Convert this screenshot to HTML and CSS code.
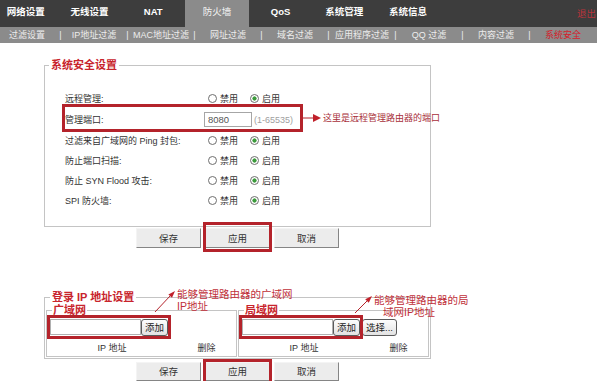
FILE: index.html
```html
<!DOCTYPE html>
<html lang="zh-CN">
  <head>
    <meta charset="UTF-8" />
    <meta name="viewport" content="width=device-width, initial-scale=1.0" />
    <title>防火墙 - 系统安全</title>
    <link rel="stylesheet" href="styles.css">
  </head>
  <body>
    <div class="topnav">
      <a class="tab">网络设置</a>
      <a class="tab">无线设置</a>
      <a class="tab">NAT</a>
      <a class="tab active">防火墙</a>
      <a class="tab">QoS</a>
      <a class="tab">系统管理</a>
      <a class="tab">系统信息</a>
      <a class="logout">退出</a>
    </div>

    <div class="subnav">
      <a>过滤设置</a><span class="sep">|</span>
      <a>IP地址过滤</a><span class="sep">|</span>
      <a>MAC地址过滤</a><span class="sep">|</span>
      <a>网址过滤</a><span class="sep">|</span>
      <a>域名过滤</a><span class="sep">|</span>
      <a>应用程序过滤</a><span class="sep">|</span>
      <a>QQ 过滤</a><span class="sep">|</span>
      <a>内容过滤</a><span class="sep">|</span>
      <a class="current">系统安全</a>
    </div>

    <div class="main">
      <fieldset class="panel panel-security">
        <legend>系统安全设置</legend>

        <div class="row">
          <span class="label">远程管理:</span>
          <span class="radio">禁用</span><span class="radio on">启用</span>
        </div>

        <div class="row row-port">
          <span class="label">管理端口:</span>
          <input class="port" type="text" value="8080" />
          <span class="hint">(1-65535)</span>
          <span class="hl-port"></span>
          <span class="note">
            <svg width="18" height="10" viewBox="0 0 18 10">
              <line x1="0" y1="5" x2="11" y2="5" stroke="#b4232b" stroke-width="1" />
              <polygon points="10,1 18,5 10,9" fill="#c0202a" />
            </svg>
            这里是远程管理路由器的端口
          </span>
        </div>

        <div class="row">
          <span class="label">过滤来自广域网的 Ping 封包:</span>
          <span class="radio">禁用</span><span class="radio on">启用</span>
        </div>

        <div class="row">
          <span class="label">防止端口扫描:</span>
          <span class="radio">禁用</span><span class="radio on">启用</span>
        </div>

        <div class="row">
          <span class="label">防止 SYN Flood 攻击:</span>
          <span class="radio">禁用</span><span class="radio on">启用</span>
        </div>

        <div class="row">
          <span class="label">SPI 防火墙:</span>
          <span class="radio">禁用</span><span class="radio on">启用</span>
        </div>
      </fieldset>

      <div class="actions">
        <button class="btn">保存</button>
        <button class="btn marked">应用</button>
        <button class="btn">取消</button>
      </div>

      <div class="login-box">
        <fieldset class="panel panel-login">
          <legend>登录 IP 地址设置</legend>
          <div class="nets">
            <fieldset class="net">
              <legend>广域网</legend>
              <div class="add-row">
                <span class="hl-group">
                  <input class="ip" type="text" /><button class="small">添加</button>
                </span>
              </div>
              <div class="list-head">
                <span class="col-ip">IP 地址</span>
                <span class="col-del">删除</span>
              </div>
            </fieldset>

            <fieldset class="net">
              <legend>局域网</legend>
              <div class="add-row">
                <span class="hl-group">
                  <input class="ip" type="text" /><button class="small">添加</button>
                </span>
                <button class="small pick">选择...</button>
              </div>
              <div class="list-head">
                <span class="col-ip">IP 地址</span>
                <span class="col-del">删除</span>
              </div>
            </fieldset>
          </div>
        </fieldset>

        <!-- annotations -->
        <svg class="arrow arrow-wan" width="30" height="28" viewBox="0 0 30 28">
          <line x1="5" y1="24" x2="21" y2="7" stroke="#b4232b" stroke-width="1" />
          <polygon points="25,3 22,9.8 18.4,6.4" fill="#c0202a" />
        </svg>
        <span class="callout callout-wan">能够管理路由器的广域网<br>IP地址</span>

        <svg class="arrow arrow-lan" width="26" height="24" viewBox="0 0 26 24">
          <line x1="5" y1="20" x2="18" y2="7" stroke="#b4232b" stroke-width="1" />
          <polygon points="22,3 18.8,9.8 15.2,6.2" fill="#c0202a" />
        </svg>
        <span class="callout callout-lan">能够管理路由器的局<br><span class="indent">域网IP地址</span></span>
      </div>

      <div class="actions actions-bottom">
        <button class="btn">保存</button>
        <button class="btn marked">应用</button>
        <button class="btn">取消</button>
      </div>
    </div>
  </body>
</html>
```

FILE: styles.css
```css
body {
  margin: 0;
  font-family: "Liberation Sans", "Noto Sans CJK SC", sans-serif;
  font-size: 9px;
  color: #333;
  background-color: #fff;
}

/* top navigation */

.topnav {
  display: flex;
  height: 27px;
  background-color: #3d3d3d;
}

.tab {
  width: 63.7px;
  flex-shrink: 0;
  text-align: center;
  line-height: 24px;
  font-size: 9.5px;
  font-weight: bold;
  color: #fff;
}

.tab:first-child {
  margin-left: -6px;
}

.tab.active {
  background-color: #8b8b8b;
  font-weight: normal;
  color: #f2f2f2;
}

.logout {
  margin-left: auto;
  margin-right: 1px;
  line-height: 27px;
  font-size: 9.5px;
  color: #b8343c;
}

.subnav {
  display: flex;
  height: 16px;
  line-height: 16px;
  background-color: #8b8b8b;
  color: #ededed;
  border-bottom: 1px solid #fff;
}

.subnav a {
  width: 67px;
  flex-shrink: 0;
  text-align: center;
}

.subnav a:first-child {
  margin-left: -6.5px;
}

.subnav a.current {
  color: #d4202a;
}

.subnav .sep {
  width: 0;
  display: flex;
  justify-content: center;
}

/* content */

.main {
  padding-left: 44px;
}

.panel {
  width: 387px;
  box-sizing: border-box;
  margin: 0;
  border: 1px solid #c4c4c4;
}

.panel > legend {
  margin-left: 4px;
  padding: 0 2px;
  font-size: 11px;
  line-height: 13px;
  font-weight: bold;
  color: #c8242c;
}

.panel-security {
  margin-top: 15px;
  padding: 16.5px 0 15px;
}

.row {
  position: relative;
  display: flex;
  align-items: center;
  height: 20px;
  padding-left: 20px;
}

.row-port {
  height: 22px;
}

.label {
  width: 139px;
  flex-shrink: 0;
}

.radio {
  display: inline-flex;
  align-items: center;
  margin-left: 4px;
}

.radio + .radio {
  margin-left: 12px;
}

.radio::before {
  content: "";
  width: 9px;
  height: 9px;
  margin-right: 3px;
  box-sizing: border-box;
  border: 1px solid #6e6e6e;
  border-radius: 50%;
  background-color: #fff;
}

.radio.on::before {
  background: radial-gradient(circle, #3b9a3b 0 1.8px, #fff 2.4px);
}

.port {
  width: 48px;
  height: 15px;
  box-sizing: border-box;
  margin: 0;
  padding: 0 3px;
  border: 1px solid #a6a6a6;
  font: inherit;
  font-size: 9.5px;
  color: #555;
}

.hint {
  margin-left: 2px;
  color: #a0a0a0;
}

.hl-port {
  position: absolute;
  left: 17px;
  top: -5px;
  width: 241px;
  height: 28px;
  box-sizing: border-box;
  border: 3px solid #b4232b;
}

.note {
  position: absolute;
  left: 258px;
  top: 3px;
  display: flex;
  align-items: center;
  gap: 2px;
  white-space: nowrap;
  line-height: 12px;
  color: #a8303a;
}

.actions {
  display: flex;
  justify-content: center;
  gap: 4px;
  width: 387px;
  margin-top: 1px;
}

.btn {
  position: relative;
  width: 65px;
  height: 20px;
  padding: 0;
  border: 1px solid;
  border-color: #f4f4f4 #858585 #858585 #f4f4f4;
  background-color: #ececec;
  font: inherit;
  font-size: 9.5px;
  color: #333;
}

.btn.marked::after {
  content: "";
  position: absolute;
  top: -7px;
  right: -3px;
  bottom: -5px;
  left: -3px;
  border: 3px solid #b4232b;
}

.actions-bottom {
  margin-top: 3px;
}

.actions-bottom .btn {
  height: 19px;
}

.actions-bottom .btn.marked::after {
  top: -4px;
  bottom: -7px;
}

/* login ip settings */

.login-box {
  position: relative;
  margin-top: 43.5px;
}

.panel-login {
  padding: 0 1px 1px;
}

.nets {
  display: flex;
  gap: 1px;
}

.net {
  flex: 1;
  min-width: 0;
  margin: 0;
  padding: 1.5px 0 0;
  border: 1px solid #c4c4c4;
}

.net > legend {
  margin-left: 5px;
  padding: 0 1px;
  font-size: 11px;
  line-height: 13px;
  font-weight: bold;
  color: #c8242c;
}

.add-row {
  display: flex;
  align-items: center;
  height: 17px;
  padding-left: 3px;
}

.hl-group {
  position: relative;
  display: flex;
  align-items: center;
}

.hl-group::after {
  content: "";
  position: absolute;
  top: -4px;
  right: -3px;
  bottom: -3px;
  left: -3px;
  border: 3px solid #b4232b;
}

.ip {
  width: 91px;
  height: 16px;
  box-sizing: border-box;
  margin: 0;
  padding: 0 2px;
  border: 1px solid #b0b0b0;
  font: inherit;
}

.small {
  height: 17px;
  padding: 0 3px;
  border: 1px solid #5a5a5a;
  border-radius: 3px;
  background: linear-gradient(#fdfdfd, #e2e2e2);
  font: inherit;
  font-size: 9.5px;
  color: #222;
}

.pick {
  margin-left: 2px;
}

.list-head {
  display: flex;
  height: 16px;
  margin-top: 4px;
  line-height: 16px;
}

.col-ip {
  width: 130px;
  text-align: center;
}

.col-del {
  flex: 1;
  text-align: center;
}

.arrow {
  position: absolute;
}

.arrow-wan {
  left: 106px;
  top: -3px;
}

.arrow-lan {
  left: 306px;
  top: 1.5px;
}

.callout {
  position: absolute;
  white-space: nowrap;
  font-size: 10.5px;
  line-height: 12px;
  color: #c0303a;
}

.callout-wan {
  left: 133px;
  top: -3px;
}

.callout-lan {
  left: 330px;
  top: 2.5px;
}

.callout .indent {
  padding-left: 9px;
}
```
